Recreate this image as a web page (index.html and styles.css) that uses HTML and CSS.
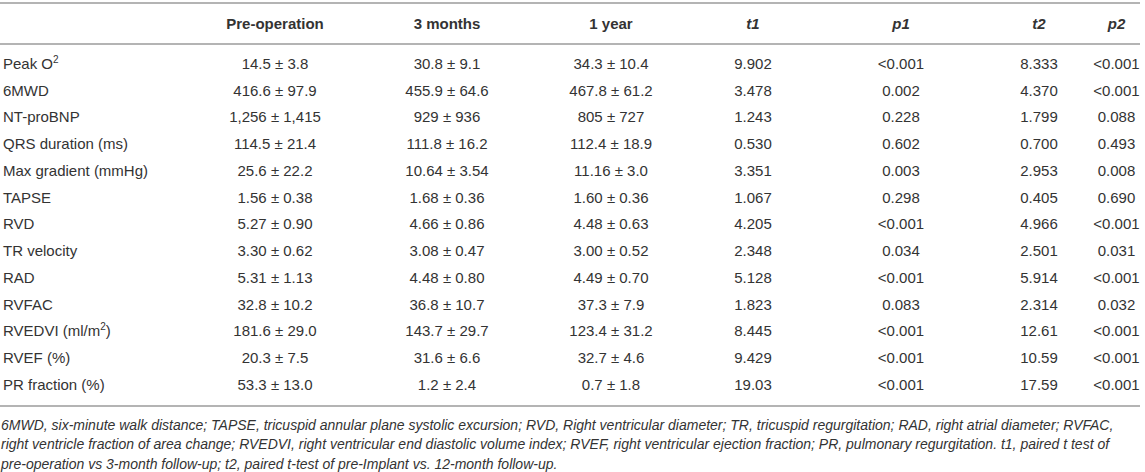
FILE: index.html
```html
<!DOCTYPE html>
<html>
<head>
<meta charset="utf-8">
<link rel="stylesheet" href="styles.css">
</head>
<body>
<div class="tbl">
  <div class="row head">
    <div class="lab"></div>
    <div>Pre-operation</div>
    <div>3 months</div>
    <div>1 year</div>
    <div class="it">t1</div>
    <div class="it">p1</div>
    <div class="it">t2</div>
    <div class="it">p2</div>
  </div>
  <div class="tbody">
    <div class="row"><div class="lab">Peak O<sup>2</sup></div><div>14.5 ± 3.8</div><div>30.8 ± 9.1</div><div>34.3 ± 10.4</div><div>9.902</div><div>&lt;0.001</div><div>8.333</div><div>&lt;0.001</div></div>
    <div class="row"><div class="lab">6MWD</div><div>416.6 ± 97.9</div><div>455.9 ± 64.6</div><div>467.8 ± 61.2</div><div>3.478</div><div>0.002</div><div>4.370</div><div>&lt;0.001</div></div>
    <div class="row"><div class="lab">NT-proBNP</div><div>1,256 ± 1,415</div><div>929 ± 936</div><div>805 ± 727</div><div>1.243</div><div>0.228</div><div>1.799</div><div>0.088</div></div>
    <div class="row"><div class="lab">QRS duration (ms)</div><div>114.5 ± 21.4</div><div>111.8 ± 16.2</div><div>112.4 ± 18.9</div><div>0.530</div><div>0.602</div><div>0.700</div><div>0.493</div></div>
    <div class="row"><div class="lab">Max gradient (mmHg)</div><div>25.6 ± 22.2</div><div>10.64 ± 3.54</div><div>11.16 ± 3.0</div><div>3.351</div><div>0.003</div><div>2.953</div><div>0.008</div></div>
    <div class="row"><div class="lab">TAPSE</div><div>1.56 ± 0.38</div><div>1.68 ± 0.36</div><div>1.60 ± 0.36</div><div>1.067</div><div>0.298</div><div>0.405</div><div>0.690</div></div>
    <div class="row"><div class="lab">RVD</div><div>5.27 ± 0.90</div><div>4.66 ± 0.86</div><div>4.48 ± 0.63</div><div>4.205</div><div>&lt;0.001</div><div>4.966</div><div>&lt;0.001</div></div>
    <div class="row"><div class="lab">TR velocity</div><div>3.30 ± 0.62</div><div>3.08 ± 0.47</div><div>3.00 ± 0.52</div><div>2.348</div><div>0.034</div><div>2.501</div><div>0.031</div></div>
    <div class="row"><div class="lab">RAD</div><div>5.31 ± 1.13</div><div>4.48 ± 0.80</div><div>4.49 ± 0.70</div><div>5.128</div><div>&lt;0.001</div><div>5.914</div><div>&lt;0.001</div></div>
    <div class="row"><div class="lab">RVFAC</div><div>32.8 ± 10.2</div><div>36.8 ± 10.7</div><div>37.3 ± 7.9</div><div>1.823</div><div>0.083</div><div>2.314</div><div>0.032</div></div>
    <div class="row"><div class="lab">RVEDVI (ml/m<sup>2</sup>)</div><div>181.6 ± 29.0</div><div>143.7 ± 29.7</div><div>123.4 ± 31.2</div><div>8.445</div><div>&lt;0.001</div><div>12.61</div><div>&lt;0.001</div></div>
    <div class="row"><div class="lab">RVEF (%)</div><div>20.3 ± 7.5</div><div>31.6 ± 6.6</div><div>32.7 ± 4.6</div><div>9.429</div><div>&lt;0.001</div><div>10.59</div><div>&lt;0.001</div></div>
    <div class="row"><div class="lab">PR fraction (%)</div><div>53.3 ± 13.0</div><div>1.2 ± 2.4</div><div>0.7 ± 1.8</div><div>19.03</div><div>&lt;0.001</div><div>17.59</div><div>&lt;0.001</div></div>
  </div>
</div>
<p class="caption">6MWD, six-minute walk distance; TAPSE, tricuspid annular plane systolic excursion; RVD, Right ventricular diameter; TR, tricuspid regurgitation; RAD, right atrial diameter; RVFAC, right ventricle fraction of area change; RVEDVI, right ventricular end diastolic volume index; RVEF, right ventricular ejection fraction; PR, pulmonary regurgitation. t1, paired t test of pre-operation vs 3-month follow-up; t2, paired t-test of pre-Implant vs. 12-month follow-up.</p>
</body>
</html>
```

FILE: styles.css
```css
html, body {
  margin: 0;
  padding: 0;
  background: #ffffff;
}
body {
  font-family: "Liberation Sans", Arial, sans-serif;
  color: #333333;
  font-size: 15px;
  width: 1145px;
}
.tbl {
  margin-top: 2px;
  width: 1140px;
  border-top: 2px solid #b4b4b4;
  border-bottom: 2px solid #b4b4b4;
}
.row {
  display: grid;
  grid-template-columns: 189px 172px 172px 156px 128px 168px 108px 47px;
  align-items: center;
  height: 26.75px;
}
.row > div {
  text-align: center;
  white-space: nowrap;
}
.row > .lab {
  text-align: left;
  padding-left: 3px;
}
.head {
  height: 39px;
  font-weight: bold;
  border-bottom: 2px solid #b4b4b4;
}
.head .it {
  font-style: italic;
}
.tbody {
  padding: 5px 0 7px;
}
sup {
  font-size: 10px;
  line-height: 0;
  vertical-align: 6px;
}
.caption {
  margin: 9px 0 0;
  width: 1130px;
  font-style: italic;
  font-size: 14px;
  line-height: 19.5px;
  padding-left: 1px;
}
```
